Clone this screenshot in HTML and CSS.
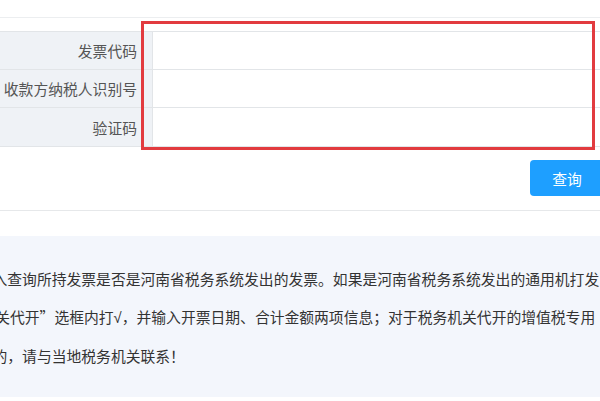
FILE: index.html
```html
<!DOCTYPE html>
<html lang="zh-CN">
<head>
<meta charset="utf-8">
<title>发票查询</title>
<link rel="stylesheet" href="styles.css">
</head>
<body>
<div class="page">
  <div class="topline"></div>
  <div class="form">
    <div class="grid">
      <div class="label">发票代码</div><div class="field"></div>
      <div class="label">收款方纳税人识别号</div><div class="field"></div>
      <div class="label last">验证码</div><div class="field last"></div>
    </div>
    <div class="highlight"></div>
  </div>
  <div class="actions">
    <button class="btn" type="button">查询</button>
  </div>
  <div class="notice">
    <div class="text">
      <div class="line">入查询所持发票是否是河南省税务系统发出的发票。如果是河南省税务系统发出的通用机打发</div>
      <div class="line line-b">关代开”选框内打<span class="check">√</span>，并输入开票日期、合计金额两项信息；对于税务机关代开的增值税专用</div>
      <div class="line">的，请与当地税务机关联系！</div>
    </div>
  </div>
</div>
</body>
</html>
```
FILE: styles.css
```css
* { box-sizing: border-box; }
html, body {
  margin: 0;
  padding: 0;
  background: #fff;
  overflow: hidden;
}
body {
  font-family: "Liberation Sans", "Noto Sans CJK SC", sans-serif;
  width: 600px;
  height: 401px;
}
.page {
  width: 600px;
  overflow: hidden;
}
.topline {
  height: 18px;
  border-bottom: 1px solid #eceef0;
}
.form {
  position: relative;
  margin-top: 13px;
}
.grid {
  display: grid;
  grid-template-columns: 153px 1fr;
  grid-template-rows: 38px 38px 40px;
}
.label {
  background: #eff2f6;
  border-top: 1px solid #e2e5e8;
  border-right: 1px solid #e2e5e8;
  color: #555;
  font-size: 14.8px;
  text-align: right;
  padding-right: 15px;
  display: flex;
  align-items: center;
  justify-content: flex-end;
  white-space: nowrap;
}
.field {
  border-top: 1px solid #e2e5e8;
  background: #fff;
}
.label.last, .field.last {
  border-bottom: 1px solid #e2e5e8;
}
.highlight {
  position: absolute;
  left: 141px;
  top: -10px;
  width: 454px;
  height: 129px;
  border: 3px solid #e23b3f;
}
.actions {
  display: flex;
  justify-content: flex-end;
  margin-top: 13px;
  margin-right: -4px;
  padding-bottom: 14px;
  border-bottom: 1px solid #e6e8ea;
}
.btn {
  width: 74px;
  height: 36px;
  border: 0;
  border-radius: 4px;
  background: #1e9fff;
  color: #fff;
  font-family: "Liberation Sans", "Noto Sans CJK SC", sans-serif;
  font-size: 14.8px;
  padding: 0;
}
.notice {
  margin-top: 25px;
  background: #f3f6fc;
  height: 161px;
  padding-top: 24px;
  overflow: hidden;
}
.text {
  margin-left: -7.5px;
  color: #333;
  font-family: "Noto Sans CJK SC", "Liberation Sans", sans-serif;
  font-size: 14.8px;
  line-height: 37.5px;
}
.line {
  white-space: nowrap;
}
.line-b {
  padding-left: 2.7px;
}
.check {
  font-family: "Liberation Sans", sans-serif;
}
```
